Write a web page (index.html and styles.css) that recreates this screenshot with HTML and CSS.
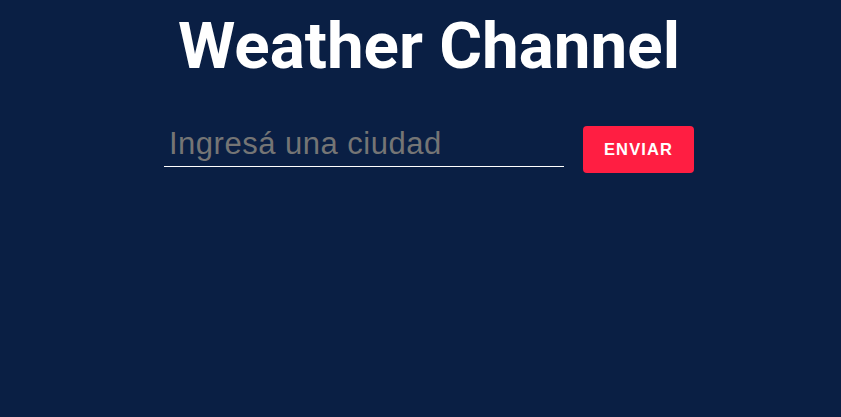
FILE: index.html
```html
<!DOCTYPE html>
<html lang="es">
<head>
<meta charset="utf-8">
<title>Weather Channel</title>
<link rel="stylesheet" href="styles.css">
</head>
<body>
<main class="app">
  <h1 class="title">Weather Channel</h1>
  <form class="search">
    <input class="city" type="text" placeholder="Ingresá una ciudad">
    <button class="send" type="button">ENVIAR</button>
  </form>
</main>
</body>
</html>
```
FILE: styles.css
```css
html, body {
  margin: 0;
  padding: 0;
  background: #0a1f44;
  height: 100%;
}
.app {
  display: flex;
  flex-direction: column;
  align-items: center;
  padding-top: 8px;
  padding-left: 17px;
}
.title {
  margin: 0;
  font-family: Roboto, sans-serif;
  font-weight: 700;
  font-size: 65.5px;
  line-height: 76px;
  color: #ffffff;
}
.search {
  display: flex;
  align-items: flex-start;
  gap: 19px;
  margin-top: 42px;
}
.city {
  width: 400px;
  box-sizing: border-box;
  height: 41px;
  background: transparent;
  border: none;
  border-bottom: 1px solid #ffffff;
  padding: 0 0 4px 5px;
  font-family: "Liberation Sans", Arial, sans-serif;
  font-size: 31px;
  letter-spacing: 0.5px;
  color: #ffffff;
  outline: none;
}
.city::placeholder {
  color: #757575;
}
.send {
  width: 111px;
  height: 47px;
  border: none;
  border-radius: 4px;
  background: #ff1e42;
  color: #ffffff;
  font-family: "Liberation Sans", Arial, sans-serif;
  font-weight: 700;
  font-size: 16.5px;
  letter-spacing: 1.1px;
  cursor: pointer;
}
```
